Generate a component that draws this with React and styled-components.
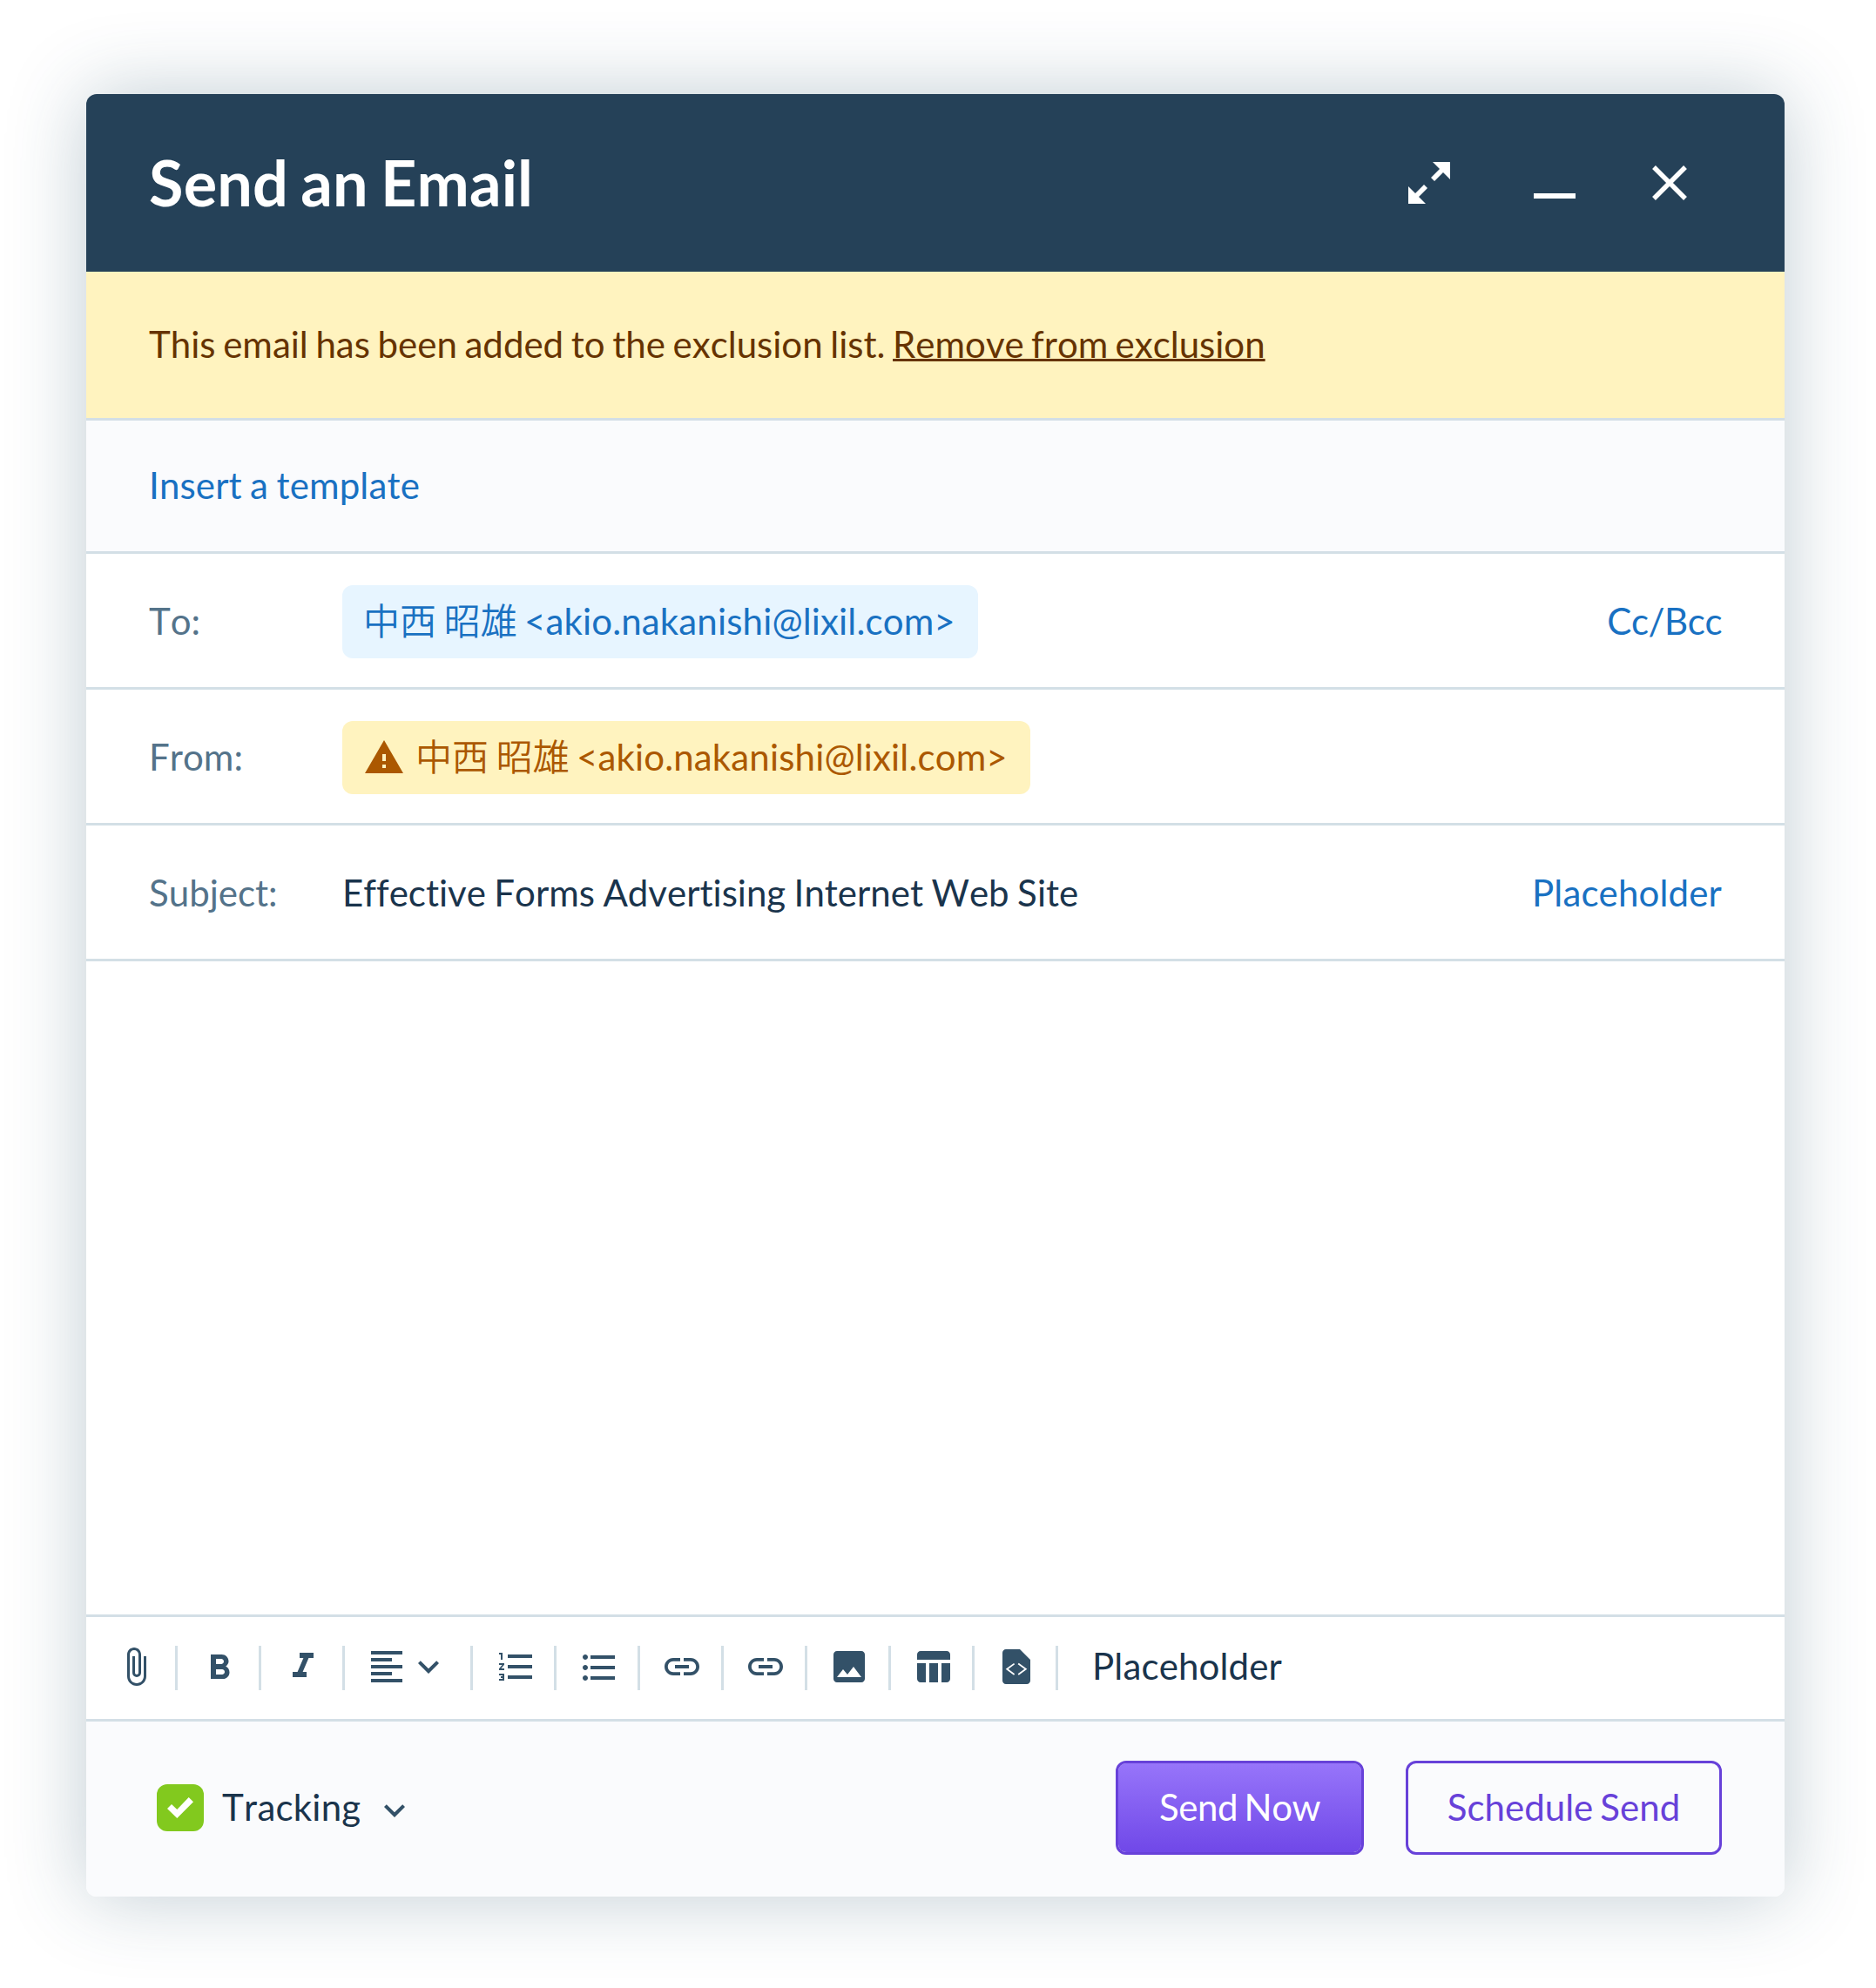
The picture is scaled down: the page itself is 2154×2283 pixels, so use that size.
import React from "react";
import styled, { createGlobalStyle } from "styled-components";

const Global = createGlobalStyle`
  *, *::before, *::after { box-sizing: border-box; }
  body {
    margin: 0;
    background: #fff;
    font-family: Lato, "Noto Sans CJK JP", sans-serif;
    font-size: 42px;
    line-height: 60px;
    font-kerning: none;
    font-variant-ligatures: none;
    color: #1a344c;
  }
  button { font: inherit; font-kerning: none; margin: 0; padding: 0; border: 0; background: none; color: inherit; }
`;

const Page = styled.main`
  min-height: 2283px;
  padding: 108px 105px 105px 99px;
`;

const Dialog = styled.section`
  display: flex;
  flex-direction: column;
  width: 1950px;
  height: 2070px;
  border-radius: 12px;
  background: #fff;
  box-shadow: 0 0 90px rgba(37, 78, 105, 0.29);
  overflow: hidden;
`;

const Header = styled.header`
  display: flex;
  align-items: center;
  justify-content: space-between;
  height: 204px;
  padding: 0 108px 0 72px;
  background: #254158;
  color: #fff;
`;

const Title = styled.h1`
  margin: -2px 0 0;
  font-size: 72px;
  line-height: 96px;
  font-weight: 700;
  word-spacing: -3.4px;
  letter-spacing: 0.15px;
`;

const WindowActions = styled.div`
  display: flex;
  align-items: center;
  gap: 72px;
`;

const IconButton = styled.button`
  display: flex;
  color: inherit;
`;

const Banner = styled.div`
  height: 171px;
  padding: 53px 72px;
  border-bottom: 3px solid #d3dfe6;
  background: #fff3bf;
  color: #663300;
  word-spacing: -2.1px;
`;

const BannerLink = styled.a`
  text-decoration: underline;
  text-decoration-thickness: 3px;
  text-decoration-skip-ink: none;
  text-underline-offset: 1px;
  word-spacing: -2.5px;
`;

const TemplateRow = styled.div`
  height: 153px;
  padding: 44px 72px;
  border-bottom: 3px solid #d3dfe6;
  background: #fafbfd;
`;

const Link = styled.a`
  color: #1971c2;
  letter-spacing: ${(p) => p.$tracking || 0}px;
  word-spacing: -1.6px;
`;

const Field = styled.div`
  display: flex;
  align-items: center;
  height: 156px;
  padding: 0 72px;
  border-bottom: 3px solid #d3dfe6;
`;

const Label = styled.span`
  width: 222px;
  color: #54738a;
`;

const Value = styled.div`
  flex: 1;
  display: flex;
  word-spacing: -1.3px;
`;

const Chip = styled.span`
  display: flex;
  align-items: center;
  gap: 12px;
  height: 84px;
  margin-top: 3px;
  padding: 0 26px 0 24px;
  border-radius: 12px;
  background: ${(p) => (p.$warning ? "#fff3bf" : "#e7f5ff")};
  color: ${(p) => (p.$warning ? "#ab5800" : "#1971c2")};
`;

const Person = styled.span`
  margin-top: -3px;
  word-spacing: -2.65px;
`;

const Kanji = styled.span`
  font-weight: 350;
`;

const Address = styled.span`
  letter-spacing: 0.16px;
`;

const Editor = styled.div`
  flex: 1;
`;

const Toolbar = styled.div`
  display: flex;
  align-items: flex-start;
  height: 123px;
  padding: 33px 33px 0;
  border-top: 3px solid #d3dfe6;
  border-bottom: 3px solid #d3dfe6;
  color: #335168;
`;

const Tool = styled.button`
  display: flex;
  height: 51px;
  padding-right: ${(p) => (p.$wide ? 24 : 21)}px;
  margin-right: 24px;
  border-right: 3px solid #d3dfe6;
  color: inherit;
`;

const ToolText = styled.span`
  margin: -7px 0 0 15px;
  color: #1a344c;
  letter-spacing: 0.15px;
`;

const Footer = styled.footer`
  display: flex;
  align-items: center;
  height: 201px;
  padding: 0 72px 3px 81px;
  background: #fafbfd;
`;

const Checkbox = styled.span`
  display: flex;
  align-items: center;
  justify-content: center;
  width: 54px;
  height: 54px;
  border-radius: 12px;
  background: #82c91e;
`;

const Tracking = styled.span`
  margin: -2px 15px 0 21px;
  letter-spacing: 0.2px;
`;

const Arrow = styled.span`
  display: flex;
  color: #335168;
  padding-top: 5px;
`;

const Actions = styled.div`
  display: flex;
  gap: 48px;
  margin-left: auto;
`;

const Button = styled.button`
  width: ${(p) => p.$width}px;
  height: 108px;
  padding-bottom: 2px;
  border: 3px solid #6741d9;
  border-radius: 12px;
  background: ${(p) => (p.$primary ? "linear-gradient(#9775fa, #7048e8) padding-box" : "transparent")};
  color: ${(p) => (p.$primary ? "#fff" : "#6741d9")};
  word-spacing: -2.7px;
  letter-spacing: ${(p) => (p.$primary ? "-0.45px" : "0")};
`;

const PATHS = {
  attach: "M16.5 6v11.5c0 2.21-1.79 4-4 4s-4-1.79-4-4V5a2.5 2.5 0 0 1 5 0v10.5c0 .55-.45 1-1 1s-1-.45-1-1V6H10v9.5a2.5 2.5 0 0 0 5 0V5c0-2.21-1.79-4-4-4S7 2.79 7 5v12.5c0 3.04 2.46 5.5 5.5 5.5s5.5-2.46 5.5-5.5V6h-1.5z",
  bold: "M15.6 11.79c.97-.67 1.65-1.77 1.65-2.79 0-2.26-1.75-4-4-4H7v14h7.04c2.09 0 3.71-1.7 3.71-3.79 0-1.52-.86-2.82-2.15-3.42zM10 7.5h3c.83 0 1.5.67 1.5 1.5s-.67 1.5-1.5 1.5h-3v-3zm3.5 9H10v-3h3.5c.83 0 1.5.67 1.5 1.5s-.67 1.5-1.5 1.5z",
  italic: "M10 4v3h2.21l-3.42 8H6v3h8v-3h-2.21l3.42-8H18V4z",
  align: "M15 15H3v2h12v-2zm0-8H3v2h12V7zM3 13h18v-2H3v2zm0 8h18v-2H3v2zM3 3v2h18V3H3z",
  down: "M16.59 8.59 12 13.17 7.41 8.59 6 10l6 6 6-6z",
  numbered: "M2 17h2v.5H3v1h1v.5H2v1h3v-4H2v1zm1-9h1V4H2v1h1v3zm-1 3h1.8L2 13.1v.9h3v-1H3.2L5 10.9V10H2v1zm5-6v2h14V5H7zm0 14h14v-2H7v2zm0-6h14v-2H7v2z",
  bulleted: "M4 10.5c-.83 0-1.5.67-1.5 1.5s.67 1.5 1.5 1.5 1.5-.67 1.5-1.5-.67-1.5-1.5-1.5zm0-6c-.83 0-1.5.67-1.5 1.5S3.17 7.5 4 7.5 5.5 6.83 5.5 6 4.83 4.5 4 4.5zm0 12c-.83 0-1.5.68-1.5 1.5s.68 1.5 1.5 1.5 1.5-.68 1.5-1.5-.67-1.5-1.5-1.5zM7 19h14v-2H7v2zm0-6h14v-2H7v2zm0-8v2h14V5H7z",
  link: "M3.9 12c0-1.71 1.39-3.1 3.1-3.1h4V7H7c-2.76 0-5 2.24-5 5s2.24 5 5 5h4v-1.9H7c-1.71 0-3.1-1.39-3.1-3.1zM8 13h8v-2H8v2zm9-6h-4v1.9h4c1.71 0 3.1 1.39 3.1 3.1s-1.39 3.1-3.1 3.1h-4V17h4c2.76 0 5-2.24 5-5s-2.24-5-5-5z",
  image: "M21 19V5c0-1.1-.9-2-2-2H5c-1.1 0-2 .9-2 2v14c0 1.1.9 2 2 2h14c1.1 0 2-.9 2-2zM8.5 13.5l2.5 3.01L14.5 12l4.5 6H5l3.5-4.5z",
  table: "M10 10.02h5V21h-5V10.02zM17 21h3c1.1 0 2-.9 2-2v-9h-5v11zm3-18H5c-1.1 0-2 .9-2 2v3h19V5c0-1.1-.9-2-2-2zM3 19c0 1.1.9 2 2 2h3V10H3v9z",
  file: "M6 2c-1.1 0-1.99.9-1.99 2L4 20c0 1.1.89 2 1.99 2H18c1.1 0 2-.9 2-2V8l-6-6H6z",
  warning: "M1 21h22L12 2 1 21zm12-3h-2v-2h2v2zm0-4h-2v-4h2v4z",
};

const Icon = ({ name, viewBox = "0 0 24 24", children }) => (
  <svg width="48" height="48" viewBox={viewBox} fill="currentColor" aria-hidden="true">
    <path d={PATHS[name]} />
    {children}
  </svg>
);

const TOOLS = [
  { name: "attach" },
  { name: "bold" },
  { name: "italic" },
  { name: "align", menu: true },
  { name: "numbered", viewBox: "-1 0 24 24" },
  { name: "bulleted", viewBox: "-0.5 -0.5 24 24" },
  { name: "link" },
  { name: "link" },
  { name: "image" },
  { name: "table" },
  { name: "file", code: true },
];

const Contact = () => (
  <Person>
    <Kanji>中西 昭雄</Kanji> <Address>&lt;akio.nakanishi@lixil.com&gt;</Address>
  </Person>
);

export default function App() {
  return (
    <Page>
      <Global />
      <Dialog>
        <Header>
          <Title>Send an Email</Title>
          <WindowActions>
            <IconButton aria-label="Expand">
              <svg width="72" height="72" viewBox="0 0 72 72" fill="#fff">
                <path d="M40 12h20v20l-8-8-10 10-4-4 10-10zM12 40l8 8 10-10 4 4-10 10 8 8H12z" />
              </svg>
            </IconButton>
            <IconButton aria-label="Minimize">
              <svg width="72" height="72" viewBox="0 0 72 72" fill="#fff">
                <path d="M12 48h48v6H12z" />
              </svg>
            </IconButton>
            <IconButton aria-label="Close">
              <svg width="48" height="72" viewBox="0 0 48 72" stroke="#fff" strokeWidth="5.4">
                <path d="M6 18l36 36M42 18L6 54" />
              </svg>
            </IconButton>
          </WindowActions>
        </Header>
        <Banner>
          This email has been added to the exclusion list. <BannerLink>Remove from exclusion</BannerLink>
        </Banner>
        <TemplateRow>
          <Link $tracking={0.15}>Insert a template</Link>
        </TemplateRow>
        <Field>
          <Label>To:</Label>
          <Value>
            <Chip><Contact /></Chip>
          </Value>
          <Link $tracking={-0.45}>Cc/Bcc</Link>
        </Field>
        <Field>
          <Label>From:</Label>
          <Value>
            <Chip $warning>
              <Icon name="warning" />
              <Contact />
            </Chip>
          </Value>
        </Field>
        <Field>
          <Label>Subject:</Label>
          <Value>Effective Forms Advertising Internet Web Site</Value>
          <Link $tracking={0.15}>Placeholder</Link>
        </Field>
        <Editor />
        <Toolbar>
          {TOOLS.map((t, i) => (
            <Tool key={i} $wide={t.menu}>
              <Icon name={t.name} viewBox={t.viewBox}>
                {t.code && (
                  <path d="M10.8 10.3 6.6 13.4l4.2 3.1M13.1 10.3l4.3 3.1-4.3 3.1" fill="none" stroke="#fff" strokeWidth="0.9" />
                )}
              </Icon>
              {t.menu && <Icon name="down" />}
            </Tool>
          ))}
          <ToolText>Placeholder</ToolText>
        </Toolbar>
        <Footer>
          <Checkbox>
            <svg width="30" height="24" viewBox="0 0 30 24" fill="#fff">
              <path d="M0 13l5-5 6.300 6L24.700 0 30 5.300 11.300 24z" />
            </svg>
          </Checkbox>
          <Tracking>Tracking</Tracking>
          <Arrow><Icon name="down" /></Arrow>
          <Actions>
            <Button $primary $width={285}>Send Now</Button>
            <Button $width={363}>Schedule Send</Button>
          </Actions>
        </Footer>
      </Dialog>
    </Page>
  );
}
